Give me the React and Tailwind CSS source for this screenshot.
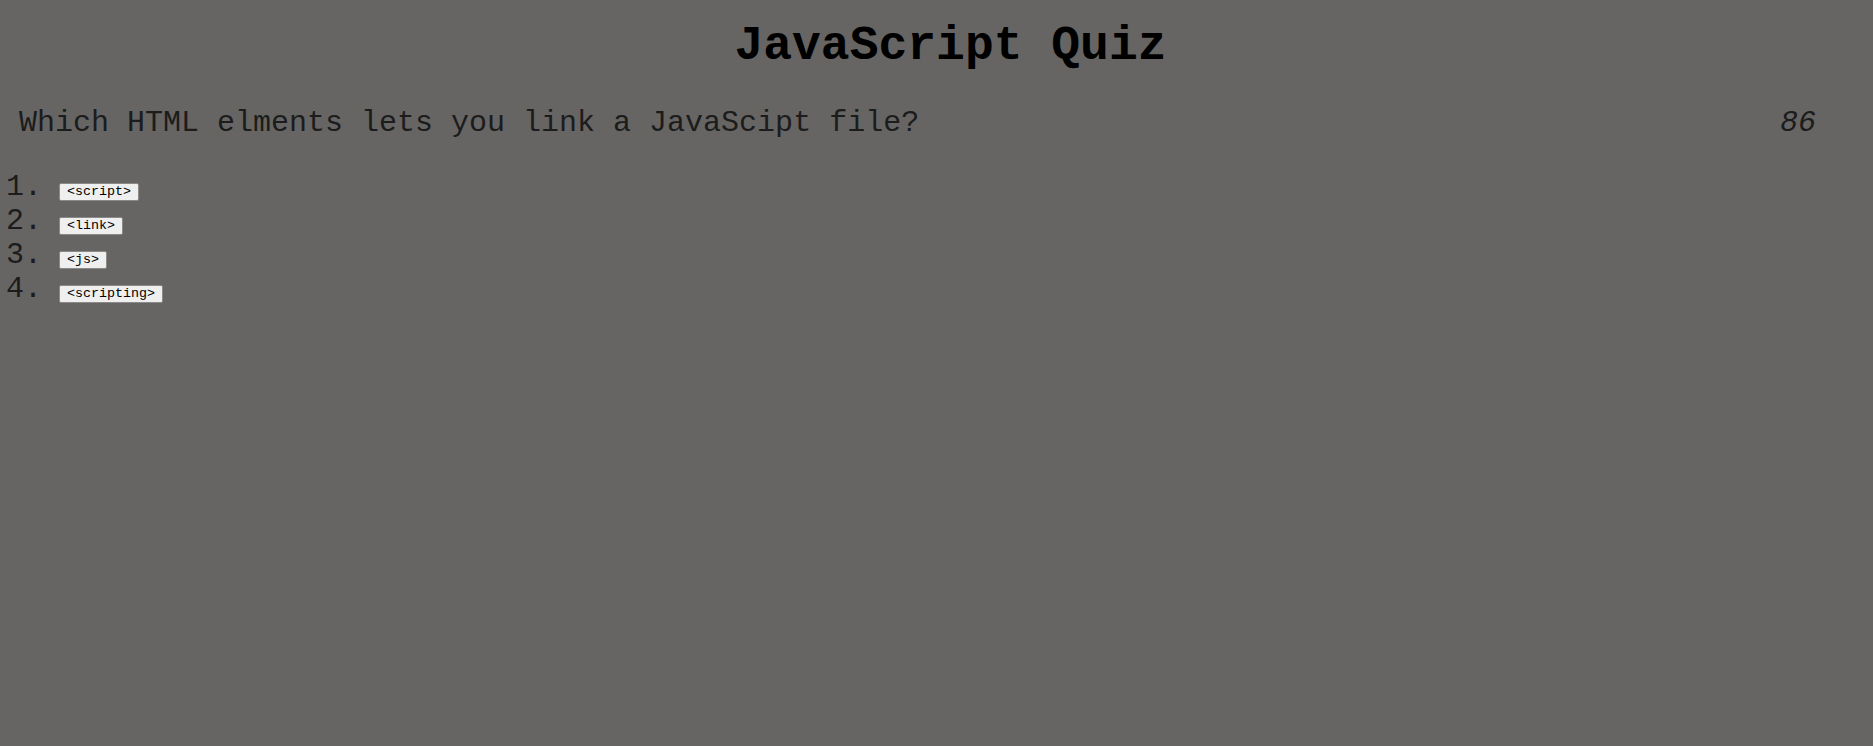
const choices = ["<script>", "<link>", "<js>", "<scripting>"];

export default function App() {
  const mono = { fontFamily: '"Liberation Mono", "Courier New", monospace' };

  return (
    <div className="min-h-screen w-full bg-[#666563]" style={mono}>
      {/* Header */}
      <h1 className="pt-[22px] pl-[28px] text-center text-[48px] font-bold leading-none text-black">
        JavaScript Quiz
      </h1>

      {/* Question + timer */}
      <div className="mt-[38px] flex items-baseline justify-between pl-[19px] pr-[57px]">
        <h2 className="text-[30px] leading-none font-normal text-[#1c1c1c]">
          Which HTML elments lets you link a JavaScipt file?
        </h2>
        <span className="text-[30px] leading-none italic text-[#1c1c1c]">86</span>
      </div>

      {/* Choices */}
      <ol className="mt-[32px] pl-[6px]">
        {choices.map((choice, i) => (
          <li key={choice} className="flex h-[34px] items-baseline">
            <span className="w-[36px] text-[30px] leading-[34px] text-[#1c1c1c]">{i + 1}.</span>
            <button
              type="button"
              className="ml-[17px] rounded-[2px] border border-[#8a8a8a] bg-[#efefef] px-[7px] py-[1px] text-[13.33px] leading-[14px] text-black"
              style={mono}
            >
              {choice}
            </button>
          </li>
        ))}
      </ol>
    </div>
  );
}
